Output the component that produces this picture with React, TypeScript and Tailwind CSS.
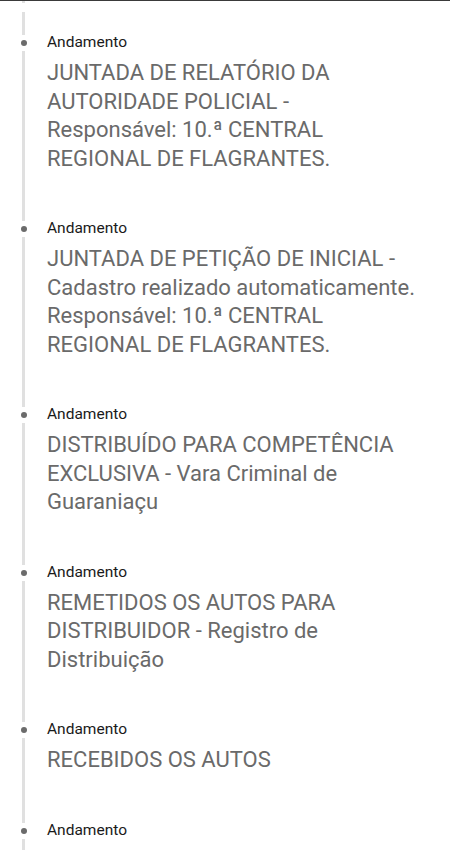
import React from "react";

const items: string[] = [
  "JUNTADA DE RELATÓRIO DA AUTORIDADE POLICIAL -\nResponsável: 10.ª CENTRAL REGIONAL DE FLAGRANTES.",
  "JUNTADA DE PETIÇÃO DE INICIAL - Cadastro realizado automaticamente.\nResponsável: 10.ª CENTRAL REGIONAL DE FLAGRANTES.",
  "DISTRIBUÍDO PARA COMPETÊNCIA EXCLUSIVA - Vara Criminal de Guaraniaçu",
  "REMETIDOS OS AUTOS PARA DISTRIBUIDOR - Registro de Distribuição",
  "RECEBIDOS OS AUTOS",
  "",
];

function Item({ text }: { text: string }) {
  return (
    <div className="flex">
      <div className="flex w-[47px] shrink-0 flex-col items-center">
        <div className="h-[3px] w-[3px] bg-[#e0e0e0]" />
        <div className="mt-[5px] h-[6px] w-[6px] rounded-full bg-[#6b6b6b]" />
        <div className="mt-[5px] w-[3px] flex-1 bg-[#e0e0e0]" />
      </div>
      <div className="flex-1 pr-[24px] pb-[45px]">
        <div className="text-[15.5px] leading-[20px] text-[#1a1a1a]">Andamento</div>
        {text && (
          <div className="mt-[7px] whitespace-pre-line text-[22px] leading-[28.5px] text-[#6a6a6a]">
            {text}
          </div>
        )}
      </div>
    </div>
  );
}

export default function App() {
  return (
    <div className="h-[850px] w-[450px] overflow-hidden bg-white font-['Roboto',sans-serif]">
      <div className="h-px bg-[#3a3a3a]" />
      <div className="flex">
        <div className="flex w-[47px] flex-col items-center">
          <div className="h-[2px] w-[3px] bg-[#e0e0e0]" />
          <div className="h-[9px]" />
          <div className="h-[20px] w-[3px] bg-[#e0e0e0]" />
        </div>
      </div>
      {items.map((t, i) => (
        <Item key={i} text={t} />
      ))}
    </div>
  );
}
